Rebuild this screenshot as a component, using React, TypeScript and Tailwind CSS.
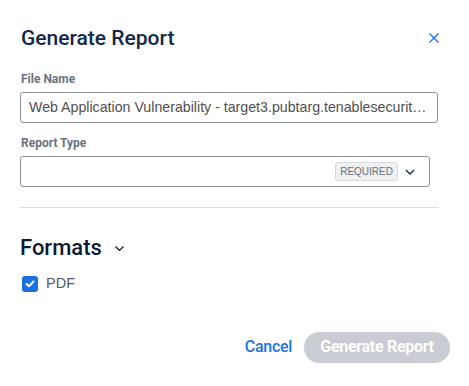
import React from "react";

export default function App() {
  return (
    <div className="w-[469px] h-[386px] bg-white relative overflow-hidden" style={{ fontFamily: "Roboto, 'Liberation Sans', sans-serif" }}>
      <div className="pl-[20px] pt-[24px]">
        <div className="flex items-center justify-between w-[420px]">
          <h1 className="text-[21px] leading-[28px] font-medium text-[#13284a] pl-[1px]">Generate Report</h1>
          <button className="w-[10px] h-[10px] mr-[1px] text-[#1a73e8]" aria-label="Close">
            <svg width="10" height="10" viewBox="0 0 10 10" fill="none" stroke="currentColor" strokeWidth="1.4">
              <path d="M0.5 0.5 L9.5 9.5 M9.5 0.5 L0.5 9.5" />
            </svg>
          </button>
        </div>

        <div className="mt-[19px] text-[12px] leading-[16px] font-bold text-[#6b7280] pl-[1px]">File Name</div>
        <div className="mt-[5px] w-[418px] h-[31px] border border-[#8c9099] rounded-[3px] flex items-center pl-[8px] pr-[6px]">
          <span className="text-[14.2px] text-[#505050] truncate" style={{ fontFamily: "'Liberation Sans', Arial, sans-serif" }}>
            Web Application Vulnerability - target3.pubtarg.tenablesecurity.com
          </span>
        </div>

        <div className="mt-[12px] text-[12px] leading-[16px] font-bold text-[#6b7280] pl-[1px]">Report Type</div>
        <div className="mt-[5px] w-[410px] h-[31px] border border-[#8c9099] rounded-[3px] flex items-center justify-end pr-[14px]">
          <span className="h-[19px] px-[4px] flex items-center bg-[#eef0f2] border border-[#d6d9dd] rounded-[3px] text-[10px] text-[#6b7280]" style={{ fontFamily: "'Liberation Sans', Arial, sans-serif" }}>
            REQUIRED
          </span>
          <svg className="ml-[7px]" width="10" height="6" viewBox="0 0 10 6" fill="none" stroke="#13284a" strokeWidth="1.4">
            <path d="M1 1 L5 5 L9 1" />
          </svg>
        </div>

        <div className="mt-[20px] w-[418px] h-px bg-[#dcdfe3]" />

        <div className="mt-[26px] flex items-center">
          <h2 className="text-[22px] leading-[28px] font-medium text-[#0e1a33]">Formats</h2>
          <svg className="ml-[13px] mt-[1px]" width="9" height="5" viewBox="0 0 9 5" fill="none" stroke="#0e1a33" strokeWidth="1.2">
            <path d="M0.5 0.5 L4.5 4.5 L8.5 0.5" />
          </svg>
        </div>

        <label className="mt-[11px] flex items-center ml-[2px]">
          <span className="w-[16px] h-[16px] rounded-[3px] bg-[#1a6fe3] flex items-center justify-center">
            <svg width="10" height="8" viewBox="0 0 10 8" fill="none" stroke="white" strokeWidth="2" strokeLinecap="round" strokeLinejoin="round">
              <path d="M1.5 4 L4 6.3 L8.5 1.5" />
            </svg>
          </span>
          <span className="ml-[8px] text-[14.5px] text-[#555b63]" style={{ fontFamily: "'Liberation Sans', Arial, sans-serif" }}>PDF</span>
        </label>

        <div className="mt-[37px] flex items-center justify-end w-[430px]">
          <button className="text-[16px] font-medium tracking-[-0.3px] text-[#1a73e8]">Cancel</button>
          <button className="ml-[12px] w-[146px] h-[31px] rounded-full bg-[#c9ccd2] text-white text-[16px] font-bold tracking-[-0.3px]">
            Generate Report
          </button>
        </div>
      </div>
    </div>
  );
}
